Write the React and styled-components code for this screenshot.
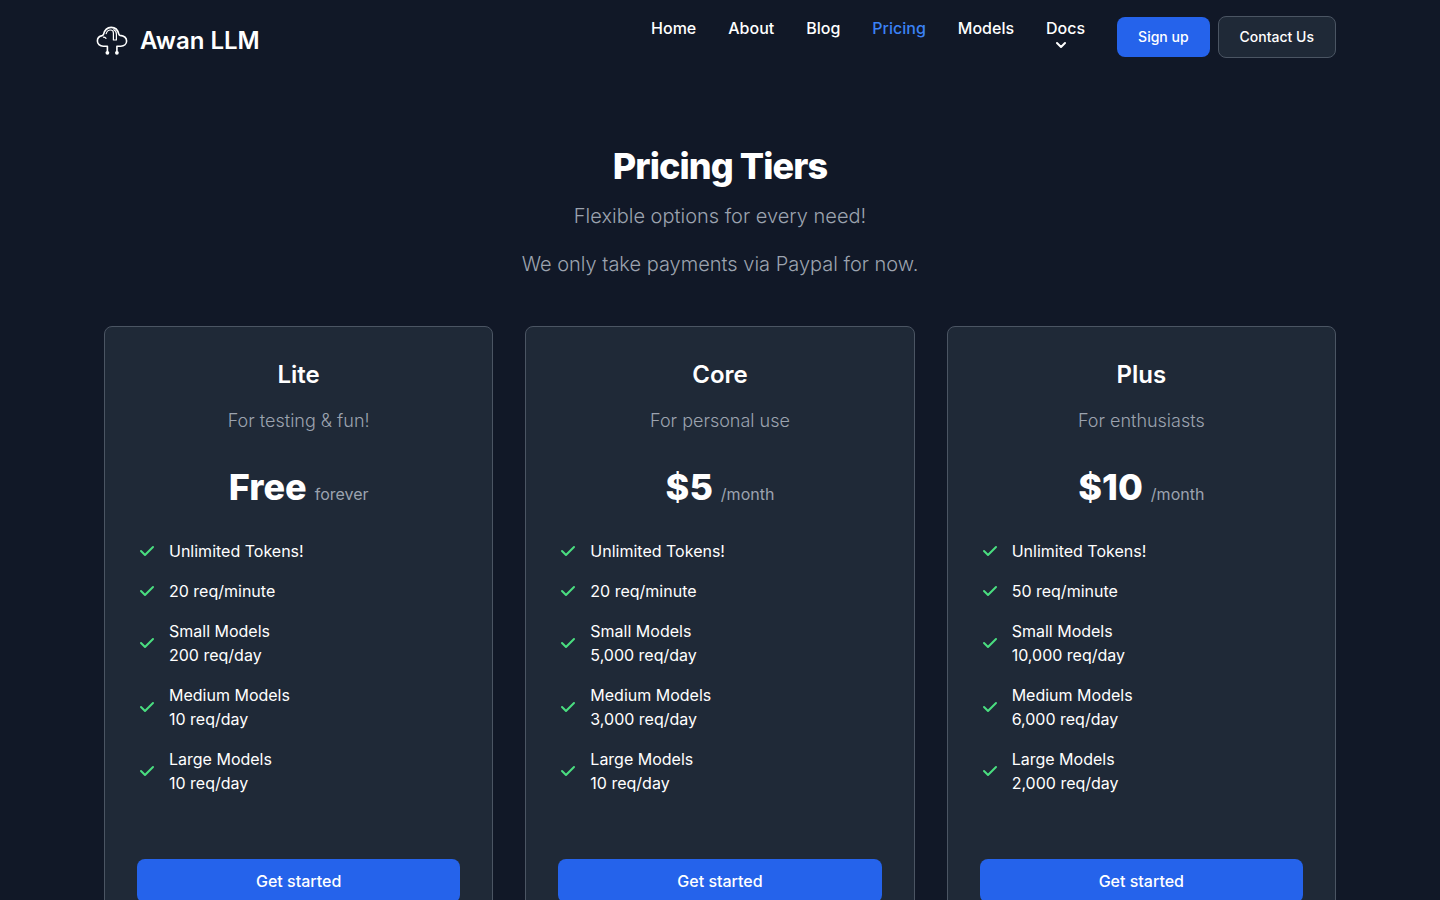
import React from "react";
import styled, { createGlobalStyle } from "styled-components";

const GlobalStyle = createGlobalStyle`
  *, *::before, *::after { box-sizing: border-box; }
  body {
    margin: 0;
    background: #111827;
    color: #ffffff;
    font-family: Inter, "Liberation Sans", sans-serif;
    font-size: 16px;
    line-height: 24px;
  }
  h1, h2, p, ul { margin: 0; padding: 0; }
  ul { list-style: none; }
  a { color: inherit; text-decoration: none; }
  button { font: inherit; color: inherit; cursor: pointer; }
`;

const Header = styled.header`
  display: flex;
  justify-content: space-between;
  max-width: 1280px;
  min-height: 82px;
  margin: 0 auto;
  padding: 16px 24px 16px 16px;
`;

const Brand = styled.a`
  display: flex;
  align-items: center;
  gap: 12px;
  font-size: 24px;
  line-height: 32px;
  font-weight: 600;
  white-space: nowrap;
`;

const Nav = styled.nav`
  display: flex;
  align-items: flex-start;
  gap: 32px;
`;

const NavList = styled.ul`
  display: flex;
  gap: 32px;
  font-weight: 500;
`;

const NavLink = styled.a`
  color: ${(p) => (p.$active ? "#3b82f6" : "#ffffff")};
`;

const NavMenuButton = styled.button`
  display: flex;
  flex-direction: column;
  padding: 0;
  border: 0;
  background: none;
  font-weight: 500;

  svg {
    width: 10px;
    height: 10px;
    margin-left: 10px;
  }
`;

const Actions = styled.div`
  display: flex;
  align-items: center;
  gap: 8px;
`;

const ActionLink = styled.a`
  padding: 10px 21px;
  border: ${(p) => (p.$outlined ? "1px solid #4b5563" : "0")};
  border-radius: 8px;
  background: ${(p) => (p.$outlined ? "#1f2937" : "#2563eb")};
  font-size: 14px;
  line-height: 20px;
  font-weight: 500;
  white-space: nowrap;
`;

const Section = styled.main`
  max-width: 1280px;
  margin: 0 auto;
  padding: 64px 24px;
`;

const Intro = styled.div`
  display: flex;
  flex-direction: column;
  align-items: center;
  margin-bottom: 48px;
  text-align: center;
`;

const PageTitle = styled.h1`
  margin-bottom: 16px;
  font-size: 36px;
  line-height: 40px;
  font-weight: 800;
  letter-spacing: -0.025em;
`;

const Lead = styled.p`
  color: #9ca3af;
  font-size: 20px;
  line-height: 28px;
  font-weight: 300;

  & + & { margin-top: 20px; }
`;

const Tiers = styled.div`
  display: grid;
  grid-template-columns: repeat(3, minmax(0, 1fr));
  gap: 32px;

  @media (max-width: 900px) { grid-template-columns: 1fr; }
`;

const Card = styled.article`
  display: flex;
  flex-direction: column;
  padding: 32px;
  border: 1px solid #4b5563;
  border-radius: 8px;
  background: #1f2937;
  text-align: center;
`;

const TierName = styled.h2`
  margin-bottom: 16px;
  font-size: 24px;
  line-height: 32px;
  font-weight: 600;
`;

const TierNote = styled.p`
  color: #9ca3af;
  font-size: 18px;
  line-height: 28px;
  font-weight: 300;
`;

const Price = styled.div`
  display: flex;
  justify-content: center;
  align-items: baseline;
  gap: 8px;
  margin: 32px 0;
`;

const Amount = styled.span`
  font-size: 36px;
  line-height: 40px;
  font-weight: 800;
`;

const Period = styled.span`
  color: #9ca3af;
`;

const Features = styled.ul`
  display: flex;
  flex-direction: column;
  gap: 16px;
  margin-bottom: 64px;
  text-align: left;
`;

const Feature = styled.li`
  display: flex;
  align-items: center;
  gap: 12px;

  svg {
    flex: none;
    width: 20px;
    height: 20px;
    color: #4ade80;
  }
`;

const Line = styled.span`
  display: block;
`;

const StartLink = styled.a`
  padding: 10px 20px;
  border-radius: 8px;
  background: #2563eb;
  font-weight: 500;
`;

const CloudLogo = () => (
  <svg width="32" height="32" viewBox="0 0 32 32" fill="none" stroke="currentColor" strokeLinecap="round" strokeLinejoin="round" aria-hidden="true">
    <path strokeWidth="1.6" d="M11.400 26.500v-5.300H7.200C3.800 21.200 1.400 18.800 1.400 15.900c0-2.800 2-4.900 4.800-5.300.6-.1 1-.4 1.200-1C8.500 5.300 11.300 2.400 15.200 2.400c3.900 0 6.700 2.700 7.600 6.800.1.700.5 1.100 1.200 1.200 3.700.4 6.600 2.500 6.600 5.600 0 3-2.500 5.200-5.800 5.200h-3.900v5.300" />
    <path strokeWidth="1.200" d="M7.500 12.200c1.100 0 1.900.4 2.500 1.100M10.200 8.700c.7-2.300 2.300-3.700 4.300-3.700 1.800 0 2.900 1.200 2.900 3v7h3V9.200c0-2.200-.9-3.700-2.600-4.500" />
    <circle cx="11.400" cy="27.800" r="1.900" fill="currentColor" stroke="none" />
    <circle cx="20.900" cy="27.800" r="1.900" fill="currentColor" stroke="none" />
  </svg>
);

const Chevron = () => (
  <svg viewBox="0 0 10 6" fill="none" stroke="currentColor" strokeWidth="2" strokeLinecap="round" strokeLinejoin="round" aria-hidden="true">
    <path d="m1 1 4 4 4-4" />
  </svg>
);

const Check = () => (
  <svg viewBox="0 0 20 20" fill="currentColor" aria-hidden="true">
    <path fillRule="evenodd" clipRule="evenodd" d="M16.707 5.293a1 1 0 010 1.414l-8 8a1 1 0 01-1.414 0l-4-4a1 1 0 011.414-1.414L8 12.586l7.293-7.293a1 1 0 011.414 0z" />
  </svg>
);

const links = ["Home", "About", "Blog", "Pricing", "Models"];

const tiers = [
  { name: "Lite", note: "For testing & fun!", price: "Free", period: "forever", rate: "20", small: "200", medium: "10", large: "10" },
  { name: "Core", note: "For personal use", price: "$5", period: "/month", rate: "20", small: "5,000", medium: "3,000", large: "10" },
  { name: "Plus", note: "For enthusiasts", price: "$10", period: "/month", rate: "50", small: "10,000", medium: "6,000", large: "2,000" },
];

const featuresOf = (t) => [
  ["Unlimited Tokens!"],
  [`${t.rate} req/minute`],
  ["Small Models", `${t.small} req/day`],
  ["Medium Models", `${t.medium} req/day`],
  ["Large Models", `${t.large} req/day`],
];

export default function App() {
  return (
    <>
      <GlobalStyle />
      <Header>
        <Brand href="#">
          <CloudLogo />
          <span>Awan LLM</span>
        </Brand>
        <Nav>
          <NavList>
            {links.map((label) => (
              <li key={label}>
                <NavLink href="#" $active={label === "Pricing"} aria-current={label === "Pricing" ? "page" : undefined}>
                  {label}
                </NavLink>
              </li>
            ))}
            <li>
              <NavMenuButton type="button">
                Docs
                <Chevron />
              </NavMenuButton>
            </li>
          </NavList>
          <Actions>
            <ActionLink href="#">Sign up</ActionLink>
            <ActionLink href="#" $outlined>Contact Us</ActionLink>
          </Actions>
        </Nav>
      </Header>
      <Section>
        <Intro>
          <PageTitle>Pricing Tiers</PageTitle>
          <Lead>Flexible options for every need!</Lead>
          <Lead>We only take payments via Paypal for now.</Lead>
        </Intro>
        <Tiers>
          {tiers.map((tier) => (
            <Card key={tier.name}>
              <TierName>{tier.name}</TierName>
              <TierNote>{tier.note}</TierNote>
              <Price>
                <Amount>{tier.price}</Amount>
                <Period>{tier.period}</Period>
              </Price>
              <Features>
                {featuresOf(tier).map((lines) => (
                  <Feature key={lines[0]}>
                    <Check />
                    <div>
                      {lines.map((line) => (
                        <Line key={line}>{line}</Line>
                      ))}
                    </div>
                  </Feature>
                ))}
              </Features>
              <StartLink href="#">Get started</StartLink>
            </Card>
          ))}
        </Tiers>
      </Section>
    </>
  );
}
